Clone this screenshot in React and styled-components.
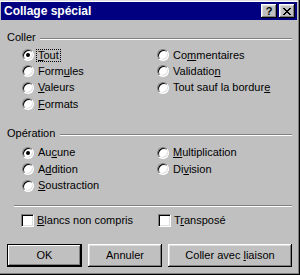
import React from "react";
import styled, { createGlobalStyle } from "styled-components";

const Global = createGlobalStyle`
  html, body { margin: 0; padding: 0; background: #c0c0c0; }
  body { font-family: "Liberation Sans", Arial, sans-serif; font-size: 11px; color: #000; }
`;

const Window = styled.div`
  width: 300px;
  height: 275px;
  box-sizing: border-box;
  padding: 2px 3px 3px 1px;
  background: #c0c0c0;
  display: flex;
  flex-direction: column;
  box-shadow: inset -1px -1px 0 #000, inset -2px -2px 0 #808080, inset 0 1px 0 #dfdfdf, inset 0 2px 0 #fff;
`;

const TitleBar = styled.div`
  height: 18px;
  flex: none;
  background: #000080;
  display: flex;
  align-items: center;
  padding: 0 2px 0 3px;
  gap: 2px;
`;

const TitleText = styled.div`
  flex: 1;
  color: #fff;
  font-weight: bold;
  font-size: 12px;
  line-height: 18px;
  white-space: nowrap;
`;

const CapButton = styled.div`
  width: 16px;
  height: 14px;
  box-sizing: border-box;
  background: #c0c0c0;
  box-shadow: inset -1px -1px 0 #000, inset 1px 1px 0 #fff, inset -2px -2px 0 #808080, inset 2px 2px 0 #dfdfdf;
  display: flex;
  align-items: center;
  justify-content: center;
  font-weight: bold;
  font-size: 11px;
  line-height: 14px;
  color: #000;
`;

const Content = styled.div`
  flex: 1;
  display: flex;
  flex-direction: column;
  padding: 10px 5px 0 6px;
`;

const GroupHeader = styled.div`
  display: flex;
  align-items: center;
  height: 14px;
  gap: ${p => p.$gap}px;
  margin-top: ${p => p.$mt || 0}px;
`;

const GroupLine = styled.div`
  flex: 1;
  height: 1px;
  margin-top: 3px;
  background: #808080;
  border-bottom: 1px solid #fff;
`;

const OptionGrid = styled.div`
  display: grid;
  grid-template-columns: 135px 1fr;
  grid-auto-flow: column;
  grid-template-rows: repeat(${p => p.$rows}, 16.33px);
  margin-top: ${p => p.$mt}px;
  margin-left: 15px;
`;

const Option = styled.div`
  display: flex;
  align-items: center;
  gap: 2px;
`;

const RadioCircle = styled.span`
  width: 12px;
  height: 12px;
  box-sizing: border-box;
  flex: none;
  border-radius: 50%;
  background: #fff;
  border: 1px solid;
  border-color: #808080 #fff #fff #808080;
  box-shadow: inset 1px 1px 0 #000, inset -1px -1px 0 #dfdfdf;
  position: relative;
  &::after {
    content: "";
    display: ${p => (p.$checked ? "block" : "none")};
    position: absolute;
    left: 3px;
    top: 3px;
    width: 4px;
    height: 4px;
    border-radius: 50%;
    background: #000;
  }
`;

const Label = styled.span`
  border: 1px dotted ${p => (p.$focus ? "#000" : "transparent")};
  padding: 0 1px;
  line-height: 11px;
  white-space: nowrap;
`;

const Key = styled.span`
  text-decoration: underline;
`;

const Separator = styled.div`
  height: 1px;
  background: #808080;
  border-bottom: 1px solid #fff;
  margin: 11px 0 0 7px;
`;

const CheckRow = styled.div`
  display: grid;
  grid-template-columns: 137px 1fr;
  height: 14px;
  margin: 7px 0 0 14px;
`;

const CheckOption = styled.div`
  display: flex;
  align-items: center;
  gap: 1px;
`;

const CheckBox = styled.span`
  width: 13px;
  height: 13px;
  box-sizing: border-box;
  flex: none;
  background: #fff;
  border: 1px solid;
  border-color: #808080 #fff #fff #808080;
  box-shadow: inset 1px 1px 0 #000, inset -1px -1px 0 #dfdfdf;
`;

const ButtonRow = styled.div`
  display: flex;
  gap: 6px;
  margin-top: 16px;
`;

const Button = styled.div`
  width: ${p => p.$w}px;
  height: 23px;
  box-sizing: border-box;
  background: #c0c0c0;
  display: flex;
  align-items: center;
  justify-content: center;
  font-size: 11px;
  white-space: nowrap;
  border: ${p => (p.$default ? "1px solid #000" : "none")};
  box-shadow: ${p =>
    p.$default
      ? "inset -1px -1px 0 #000, inset 1px 1px 0 #fff, inset -2px -2px 0 #808080"
      : "inset -1px -1px 0 #000, inset 1px 1px 0 #fff, inset -2px -2px 0 #808080, inset 2px 2px 0 #dfdfdf"};
`;

const ButtonText = styled.span`
  white-space: pre;
`;

const Radio = ({ checked, focus, children }) => (
  <Option>
    <RadioCircle $checked={checked} />
    <Label $focus={focus}>{children}</Label>
  </Option>
);

const Check = ({ children }) => (
  <CheckOption>
    <CheckBox />
    <Label>{children}</Label>
  </CheckOption>
);

const CloseGlyph = () => (
  <svg width="8" height="7" viewBox="0 0 8 7" shapeRendering="crispEdges">
    <path
      d="M0 0h2v1h-2zM6 0h2v1h-2zM1 1h2v1h-2zM5 1h2v1h-2zM2 2h4v1h-4zM3 3h2v1h-2zM2 4h4v1h-4zM1 5h2v1h-2zM5 5h2v1h-2zM0 6h2v1h-2zM6 6h2v1h-2z"
      fill="#000"
    />
  </svg>
);

export default function App() {
  return (
    <>
      <Global />
      <Window>
        <TitleBar>
          <TitleText>Collage spécial</TitleText>
          <CapButton>?</CapButton>
          <CapButton>
            <CloseGlyph />
          </CapButton>
        </TitleBar>
        <Content>
          <GroupHeader $gap={4}>
            <span>Coller</span>
            <GroupLine />
          </GroupHeader>
          <OptionGrid $rows={4} $mt={3}>
            <Radio checked focus><Key>T</Key>out</Radio>
            <Radio>Form<Key>u</Key>les</Radio>
            <Radio><Key>V</Key>aleurs</Radio>
            <Radio><Key>F</Key>ormats</Radio>
            <Radio>Co<Key>m</Key>mentaires</Radio>
            <Radio>Validatio<Key>n</Key></Radio>
            <Radio>Tout sauf la bordur<Key>e</Key></Radio>
          </OptionGrid>
          <GroupHeader $gap={5} $mt={14}>
            <span>Opération</span>
            <GroupLine />
          </GroupHeader>
          <OptionGrid $rows={3} $mt={4.5}>
            <Radio checked>Au<Key>c</Key>une</Radio>
            <Radio>A<Key>d</Key>dition</Radio>
            <Radio><Key>S</Key>oustraction</Radio>
            <Radio><Key>M</Key>ultiplication</Radio>
            <Radio>Di<Key>v</Key>ision</Radio>
          </OptionGrid>
          <Separator />
          <CheckRow>
            <Check><Key>B</Key>lancs non compris</Check>
            <Check>T<Key>r</Key>ansposé</Check>
          </CheckRow>
          <ButtonRow>
            <Button $w={75} $default><ButtonText>OK</ButtonText></Button>
            <Button $w={74}><ButtonText>Annuler</ButtonText></Button>
            <Button $w={124}><ButtonText>Coller avec <Key>l</Key>iaison</ButtonText></Button>
          </ButtonRow>
        </Content>
      </Window>
    </>
  );
}
